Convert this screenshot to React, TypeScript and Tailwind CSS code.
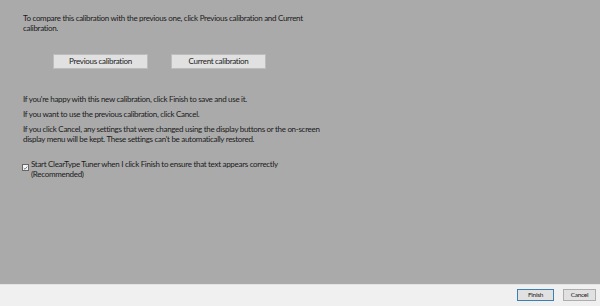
import React from "react";

export default function App() {
  return (
    <div
      className="w-[600px] h-[306px] flex flex-col bg-[#aaaaaa] text-[#1a1a1a] overflow-hidden tracking-[-0.3px]"
      style={{ fontFamily: 'Lato, "Open Sans", sans-serif' }}
    >
      <div className="flex-1 flex flex-col pl-[23px] pt-[13px] text-[8px] leading-[10px]">
        <p className="whitespace-nowrap">
          To compare this calibration with the previous one, click Previous calibration and Current
          <br />
          calibration.
        </p>
        <div className="flex gap-[23px] pl-[30px] mt-[21px]">
          <button className="w-[95px] h-[15px] bg-[#e1e1e1] border border-[#bdbdbd] text-[8px] leading-[13px]">
            Previous calibration
          </button>
          <button className="w-[95px] h-[15px] bg-[#e1e1e1] border border-[#bdbdbd] text-[8px] leading-[13px]">
            Current calibration
          </button>
        </div>
        <p className="mt-[25px] whitespace-nowrap">If you're happy with this new calibration, click Finish to save and use it.</p>
        <p className="mt-[5px] whitespace-nowrap">If you want to use the previous calibration, click Cancel.</p>
        <p className="mt-[5px] whitespace-nowrap">
          If you click Cancel, any settings that were changed using the display buttons or the on-screen
          <br />
          display menu will be kept. These settings can't be automatically restored.
        </p>
        <div className="flex items-start mt-[15px]">
          <div className="mt-[5px] -ml-[1px] w-[7px] h-[7px] bg-[#f4f4f4] border border-[#666] flex items-center justify-center">
            <svg viewBox="0 0 8 8" width="6" height="6">
              <path d="M1.2 4.2 L3.2 6 L6.8 1.8" fill="none" stroke="#333" strokeWidth="1" />
            </svg>
          </div>
          <p className="ml-[2px] whitespace-nowrap">
            Start ClearType Tuner when I click Finish to ensure that text appears correctly
            <br />
            (Recommended)
          </p>
        </div>
      </div>
      <div className="h-[22px] shrink-0 bg-[#f0f0f0] border-t border-[#e4e4e4] flex items-start justify-end pt-[4px] pr-[4px] gap-[9px]">
        <button className="w-[37px] h-[12px] bg-[#e1e1e1] border border-[#3c7fb1] text-[6.5px] leading-[10px] text-[#222]">
          Finish
        </button>
        <button className="w-[33px] h-[12px] bg-[#e1e1e1] border border-[#adadad] text-[6.5px] leading-[10px] text-[#222]">
          Cancel
        </button>
      </div>
    </div>
  );
}
